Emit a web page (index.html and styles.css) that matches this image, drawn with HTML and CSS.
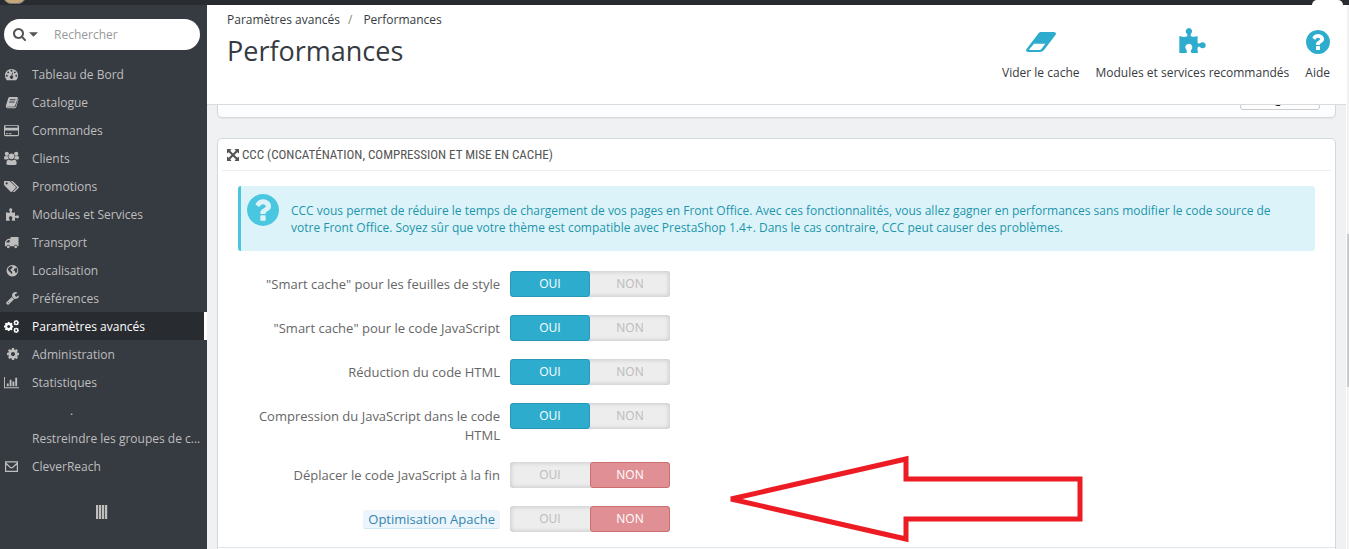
FILE: index.html
```html
<!DOCTYPE html>
<html lang="fr">
<head>
    <meta charset="utf-8"/>
    <title>Performances</title>
    <link rel="stylesheet" href="styles.css">
</head>
<body>
<svg class="sprite" aria-hidden="true">
    <symbol id="i-cog" viewBox="128 128 1536 1536"><path d="M1152 896q0-106-75-181t-181-75-181 75-75 181 75 181 181 75 181-75 75-181zm512-109v222q0 12-8 23t-20 13l-185 28q-19 54-39 91 35 50 107 138 10 12 10 25t-9 23q-27 37-99 108t-94 71q-12 0-26-9l-138-108q-44 23-91 38-16 136-29 186-7 28-36 28h-222q-14 0-24.5-8.5t-11.5-21.5l-28-184q-49-16-90-37l-141 107q-10 9-25 9-14 0-25-11-126-114-165-168-7-10-7-23 0-12 8-23 15-21 51-66.5t54-70.5q-27-50-41-99l-183-27q-13-2-21-12.5t-8-23.5v-222q0-12 8-23t19-13l186-28q14-46 39-92-40-57-107-138-10-12-10-24 0-10 9-23 26-36 98.5-107.5t94.5-71.5q13 0 26 10l138 107q44-23 91-38 16-136 29-186 7-28 36-28h222q14 0 24.5 8.5t11.5 21.5l28 184q49 16 90 37l142-107q9-9 24-9 13 0 25 10 129 119 165 170 7 8 7 22 0 12-8 23-15 21-51 66.5t-54 70.5q26 50 41 98l183 28q13 2 21 12.5t8 23.5z"/></symbol>
    <symbol id="i-help" viewBox="128 128 1536 1536"><path d="M1024 1376v-192q0-14-9-23t-23-9h-192q-14 0-23 9t-9 23v192q0 14 9 23t23 9h192q14 0 23-9t9-23zm256-672q0-88-55.5-163t-138.5-116-170-41q-243 0-371 213-15 24 8 42l132 100q7 6 19 6 16 0 25-12 53-68 86-92 34-24 86-24 48 0 85.5 26t37.5 59q0 38-20 61t-68 45q-63 28-115.5 86.5t-52.5 125.5v36q0 14 9 23t23 9h192q14 0 23-9t9-23q0-19 21.5-49.5t54.5-49.5q32-18 49-28.5t46-35 44.5-48 28-60.5 12.5-81zm384 192q0 209-103 385.5t-279.5 279.5-385.5 103-385.5-103-279.5-279.5-103-385.5 103-385.5 279.5-279.5 385.5-103 385.5 103 279.5 279.5 103 385.5z"/></symbol>
    <symbol id="i-puzzle" viewBox="0 0 78 74"><path d="M0 24Q12 28 22 25Q26 23 23 18Q18 14 19 8Q21 0 28 0Q36 0 38 8Q38 13 34 18Q32 24 36 25Q46 27 54 24V42Q55 48 61 45Q64 42 69 42Q78 43 78 51Q78 60 69 60Q64 60 61 56Q55 53 54 60Q53 68 56 73Q46 75 35 73Q32 70 36 64Q40 59 37 52Q33 46 28 47Q20 47 18 54Q17 60 21 65Q24 71 21 74H0Z"/></symbol>
</svg>
<div class="topbar">
    <span class="avatar"></span>
    <span class="tab"></span>
</div>
<div class="wrap">
    <nav class="sidebar">
        <form class="search">
            <button type="button" aria-label="Type de recherche">
                <svg width="13" height="13" viewBox="64 128 1664 1664"><path d="M1216 832q0-185-131.5-316.5t-316.5-131.5-316.5 131.5-131.5 316.5 131.5 316.5 316.5 131.5 316.5-131.5 131.5-316.5zm512 832q0 52-38 90t-90 38q-54 0-90-38l-343-342q-179 124-399 124-143 0-273.5-55.5t-225-150-150-225-55.5-273.5 55.5-273.5 150-225 225-150 273.5-55.5 273.5 55.5 225 150 150 225 55.5 273.5q0 220-124 399l343 343q37 37 37 90z"/></svg>
                <svg width="9" height="5" viewBox="0 0 8 4"><path d="M0 0h8L4 4z"/></svg>
            </button>
            <input type="text" placeholder="Rechercher" aria-label="Rechercher">
        </form>
        <ul class="menu">
            <li><a href="#"><svg viewBox="0 0 16 16"><path fill-rule="evenodd" d="M3 14Q1 12 1 9a7 7 0 0 1 14 0Q15 12 13 14ZM3 8.300a1 1 0 1 0 .1 2a1 1 0 1 0-.1-2ZM4.500 4.700a1 1 0 1 0 .1 2a1 1 0 1 0-.1-2ZM8 3a1 1 0 1 0 .1 2a1 1 0 1 0-.1-2ZM11.500 4.700a1 1 0 1 0 .1 2a1 1 0 1 0-.1-2ZM13 8.300a1 1 0 1 0 .1 2a1 1 0 1 0-.1-2ZM8.700 6L7.800 9.200a1.700 1.700 0 1 0 1 .2L9.600 6.200Z"/></svg>Tableau de Bord</a></li>
            <li><a href="#"><svg viewBox="0 0 16 16"><path fill-rule="evenodd" d="M6 2H14Q15.500 2.500 15 4L12.500 12Q12 13 11 13H4Q3 13 3.300 12.400H10.500Q11.500 12.400 12 11L14.500 4V3L15.500 4.500L13 13Q12.500 14 11.500 14H3.500Q1.500 13.500 2 11.500L4.500 3.500Q5 2 6 2ZM6.500 4.500L6.200 5.500H12L12.300 4.500ZM5.800 7L5.500 8H11.200L11.500 7Z"/></svg>Catalogue</a></li>
            <li><a href="#"><svg viewBox="0 0 16 16"><path fill-rule="evenodd" d="M1.500 2H14.500Q16 2 16 3.500V12.500Q16 14 14.500 14H1.500Q0 14 0 12.500V3.500Q0 2 1.500 2ZM1.500 3V5H14.500V3ZM1 8V12.700H15V8ZM2 11H4V12H2ZM5 11H8V12H5Z"/></svg>Commandes</a></li>
            <li><a href="#"><svg viewBox="0 0 16 16"><circle cx="3" cy="3" r="2.200"/><circle cx="13" cy="3" r="2.200"/><path d="M0 8Q0 5 1.300 5Q3 6.200 4.500 5.300Q4.300 7 5.200 8.200Q4 8.300 3.200 9H1.500Q0 9 0 8ZM16 8Q16 5 14.700 5Q13 6.200 11.500 5.300Q11.700 7 10.800 8.200Q12 8.300 12.800 9H14.500Q16 9 16 8Z"/><circle cx="8" cy="5.700" r="3"/><path d="M5 9Q8 11 11 9Q13.500 9.500 13.500 13Q13.500 15 11.500 15H4.500Q2.500 15 2.500 13Q2.500 9.500 5 9Z"/></svg>Clients</a></li>
            <li><a href="#"><svg viewBox="0 0 16 16"><path fill-rule="evenodd" d="M0 2.500Q0 2 .5 2H5Q6 2 7 3L12.400 8.300Q13 9 12.400 9.700L8.500 13.600Q7.800 14.200 7.100 13.600L1 7.500Q0 6.500 0 5.500ZM2.800 3.500a1.200 1.200 0 1 0 .1 2.400a1.200 1.200 0 1 0-.1-2.400Z"/><path d="M7 2H8.300Q9 2 10 3L15.500 8.300Q16.200 9 15.500 9.700L11.500 13.700Q10.500 14.500 9.500 13.700L14 9L7.500 2.500Z"/></svg>Promotions</a></li>
            <li><a href="#"><svg class="s13"><use href="#i-puzzle"/></svg>Modules et Services</a></li>
            <li><a href="#"><svg viewBox="0 0 16 16"><path fill-rule="evenodd" d="M7 2H15.500V12H14.500A2 2 0 0 0 10.600 12H6.500A2 2 0 0 0 2.600 12H1V8Q1 7 1.700 6.300L3.500 4.500Q4 4 5 4H7ZM2.500 8H6V5.300H4.500L2.500 7.300Z"/><circle cx="4.500" cy="12.600" r="1.500"/><circle cx="12.500" cy="12.600" r="1.500"/></svg>Transport</a></li>
            <li><a href="#"><svg viewBox="0 0 16 16"><path fill-rule="evenodd" d="M9 2a6.200 6.200 0 1 1-.1 0ZM7 3.500Q4.500 4.500 4 7L5.500 9L7 10L8 12L9 10L8 8.500L6.500 7.500L8 6L9.500 4.500L8.500 3.500ZM11 6L13.500 5Q14.500 7 14 9.500L12.500 11L11.500 8.500L10 8Z"/></svg>Localisation</a></li>
            <li><a href="#"><svg class="s13" viewBox="64 128 1664 1664"><path d="M448 1472q0-26-19-45t-45-19-45 19-19 45 19 45 45 19 45-19 19-45zm644-420l-682 682q-37 37-90 37-52 0-91-37l-106-108q-38-36-38-90 0-53 38-91l681-681q39 98 114.500 173.500t173.500 114.500zm634-435q0 39-23 106-47 134-164.500 217.500t-258.500 83.500q-185 0-316.500-131.500t-131.500-316.500 131.500-316.500 316.500-131.500q58 0 121.500 16.500t107.500 46.500q16 11 16 28t-16 28l-293 169v224l193 107q5-3 79-48.500t135.500-81 70.500-35.500q15 0 23.500 10t8.500 25z"/></svg>Préférences</a></li>
            <li class="active"><a href="#"><svg viewBox="0 0 16 16"><use href="#i-cog" x="0" y="3" width="10" height="10"/><use href="#i-cog" x="10" y="1" width="6" height="6"/><use href="#i-cog" x="10" y="9" width="6" height="6"/></svg>Paramètres avancés</a></li>
            <li><a href="#"><svg class="s12"><use href="#i-cog"/></svg>Administration</a></li>
            <li><a href="#"><svg viewBox="0 0 16 16"><path d="M0 2H1V13H16V14H0ZM3 9H5V12H3ZM6 5H8V12H6ZM9 7H11V12H9ZM12 3H14V12H12Z"/></svg>Statistiques</a></li>
            <li><a href="#" class="dot">.</a></li>
            <li><a href="#" class="noicon">Restreindre les groupes de c...</a></li>
            <li><a href="#"><svg viewBox="0 0 16 16"><path fill="none" stroke="currentColor" stroke-width="1.300" d="M1.700 3H14.300V13.300H1.700ZM2 4.500L6.500 8.800Q8 10 9.500 8.800L14 4.500"/></svg>CleverReach</a></li>
        </ul>
        <button type="button" class="collapse" aria-label="Réduire le menu"></button>
    </nav>
    <div class="main">
        <header class="page-head">
            <div>
                <div class="breadcrumb"><a href="#">Paramètres avancés</a><span>/</span><a href="#">Performances</a></div>
                <h1>Performances</h1>
            </div>
            <div class="toolbar">
                <a href="#"><svg width="30" height="30" viewBox="0 0 90 90"><path fill-rule="evenodd" d="M44 18H84Q92 19 89 26L54 72Q49 78 42 78H6Q-2 77 1 70L36 24Q40 18 44 18ZM24 53L10 70Q9 72 12 72H40Q44 72 46 69L58 53Z"/></svg>Vider le cache</a>
                <a href="#"><svg width="27" height="30"><use href="#i-puzzle" width="27" height="25" y="2"/></svg>Modules et services recommandés</a>
                <a href="#"><svg width="24" height="30"><use href="#i-help" width="24" height="24" y="4"/></svg>Aide</a>
            </div>
        </header>
        <div class="content">
            <div class="panel panel-prev">
                <button type="button">Enregistrer</button>
            </div>
            <div class="panel">
                <h3><svg width="12" height="12" viewBox="0 0 12 12"><path d="M0 0H4.500L3.200 1.700L6 4.500L8.800 1.700L7.500 0H12V4.500L10.300 3.200L7.500 6L10.300 8.800L12 7.500V12H7.500L8.800 10.300L6 7.500L3.200 10.300L4.500 12H0V7.500L1.700 8.800L4.500 6L1.700 3.200L0 4.500Z"/></svg>CCC (CONCATÉNATION, COMPRESSION ET MISE EN CACHE)</h3>
                <div class="alert">
                    <svg width="32" height="32"><use href="#i-help"/></svg>
                    <p>CCC vous permet de réduire le temps de chargement de vos pages en Front Office. Avec ces fonctionnalités, vous allez gagner en performances sans modifier le code source de votre Front Office. Soyez sûr que votre thème est compatible avec PrestaShop 1.4+. Dans le cas contraire, CCC peut causer des problèmes.</p>
                </div>
                <div class="row" role="radiogroup" aria-labelledby="l1">
                    <div class="name" id="l1">"Smart cache" pour les feuilles de style</div>
                    <div class="switch">
                        <input type="radio" name="css" id="css_on" checked><label for="css_on">OUI</label>
                        <input type="radio" name="css" id="css_off" class="off"><label for="css_off">NON</label>
                    </div>
                </div>
                <div class="row" role="radiogroup" aria-labelledby="l2">
                    <div class="name" id="l2">"Smart cache" pour le code JavaScript</div>
                    <div class="switch">
                        <input type="radio" name="js" id="js_on" checked><label for="js_on">OUI</label>
                        <input type="radio" name="js" id="js_off" class="off"><label for="js_off">NON</label>
                    </div>
                </div>
                <div class="row" role="radiogroup" aria-labelledby="l3">
                    <div class="name" id="l3">Réduction du code HTML</div>
                    <div class="switch">
                        <input type="radio" name="html" id="html_on" checked><label for="html_on">OUI</label>
                        <input type="radio" name="html" id="html_off" class="off"><label for="html_off">NON</label>
                    </div>
                </div>
                <div class="row" role="radiogroup" aria-labelledby="l4">
                    <div class="name" id="l4">Compression du JavaScript dans le code HTML</div>
                    <div class="switch">
                        <input type="radio" name="inline" id="inline_on" checked><label for="inline_on">OUI</label>
                        <input type="radio" name="inline" id="inline_off" class="off"><label for="inline_off">NON</label>
                    </div>
                </div>
                <div class="row" role="radiogroup" aria-labelledby="l5">
                    <div class="name" id="l5">Déplacer le code JavaScript à la fin</div>
                    <div class="switch">
                        <input type="radio" name="defer" id="defer_on"><label for="defer_on">OUI</label>
                        <input type="radio" name="defer" id="defer_off" class="off" checked><label for="defer_off">NON</label>
                    </div>
                </div>
                <div class="row" role="radiogroup" aria-labelledby="l6">
                    <div class="name" id="l6"><span class="tip">Optimisation Apache</span></div>
                    <div class="switch">
                        <input type="radio" name="apache" id="apache_on"><label for="apache_on">OUI</label>
                        <input type="radio" name="apache" id="apache_off" class="off" checked><label for="apache_off">NON</label>
                    </div>
                </div>
                <div class="panel-foot"></div>
            </div>
        </div>
    </div>
    <div class="scroll"><div class="thumb"></div></div>
</div>
<svg class="arrow" width="356" height="88" viewBox="0 0 356 88"><path d="M4 44L179 4V24H353V64H179V84Z"/></svg>
</body>
</html>
```
FILE: styles.css
```css
* {
    box-sizing: border-box;
    margin: 0;
    padding: 0;
}

body {
    display: flex;
    flex-direction: column;
    height: 100vh;
    overflow: hidden;
    font: 12px/17px "Open Sans", sans-serif;
    color: #363a41;
    background: #eff1f2;
}

a {
    text-decoration: none;
    color: inherit;
}
li {
    list-style: none;
}
button, input {
    font: inherit;
    border: 0;
    background: none;
}
svg {
    fill: currentColor;
}
.sprite {
    position: absolute;
    width: 0;
    height: 0;
}

/* top bar */
.topbar {
    display: flex;
    justify-content: space-between;
    align-items: flex-end;
    height: 5px;
    padding: 0 6px 0 3px;
    background: #282b30;
    overflow: hidden;
}
.avatar {
    width: 23px;
    height: 16px;
    border: 1px solid #777;
    border-radius: 8px;
    background: #c5a878;
    margin-bottom: 1px;
    flex: none;
}
.tab {
    width: 31px;
    height: 5px;
    border-radius: 10px 10px 0 0;
    background: #fff;
}
.wrap {
    display: flex;
    flex: 1;
    min-height: 0;
}

/* sidebar */
.sidebar {
    flex: none;
    width: 207px;
    padding-top: 14px;
    color: #bebebe;
    background: #363a41;
}
.search {
    display: flex;
    align-items: center;
    height: 31px;
    margin: 0 7px 10px 4px;
    padding-left: 9px;
    border-radius: 16px;
    background: #fff;
}
.search button {
    display: flex;
    align-items: center;
    gap: 3px;
    color: #555;
}
.search input {
    flex: 1;
    min-width: 0;
    padding: 0 16px;
    color: #555;
}
.search input::placeholder {
    color: #999;
}
.menu a {
    display: flex;
    align-items: center;
    gap: 13px;
    height: 28px;
    padding-left: 4px;
    white-space: nowrap;
}
.menu svg {
    width: 15px;
    height: 15px;
}
.menu .s13 {
    width: 13px;
    height: 13px;
    margin-left: 2px;
}
.menu .s12 {
    width: 12px;
    height: 12px;
    margin-left: 3px;
}
.menu .noicon {
    padding-left: 32px;
}
.menu .dot {
    padding-left: 70px;
}
.menu .active a {
    color: #fff;
    background: #282b30;
    border-right: 3px solid #fff;
}
.collapse {
    display: block;
    width: 12px;
    height: 14px;
    margin: 25px auto 0 96px;
    background: repeating-linear-gradient(90deg, #bebebe 0, #bebebe 2px, #555 2px, #555 3px);
}

/* header */
.main {
    display: flex;
    flex-direction: column;
    flex: 1;
    min-width: 0;
}
.page-head {
    display: flex;
    justify-content: space-between;
    flex: none;
    height: 100px;
    padding: 6px 16px 0 20px;
    border-bottom: 1px solid #d9dbdd;
    background: #fff;
    z-index: 1;
}
.breadcrumb span {
    margin: 0 11px 0 8px;
    color: #7a8a6a;
}
.page-head h1 {
    margin-top: 4px;
    font-size: 27px;
    line-height: 37px;
    font-weight: normal;
}
.toolbar {
    display: flex;
    gap: 16px;
    padding-top: 15px;
}
.toolbar a {
    display: flex;
    flex-direction: column;
    align-items: center;
    gap: 8px;
}
.toolbar svg {
    color: #2eacce;
}

/* panels */
.content {
    flex: 1;
    min-height: 0;
    padding: 0 10px;
    overflow: hidden;
}
.panel {
    margin-bottom: 20px;
    padding: 0 4px 20px;
    border: 1px solid #d3d8db;
    border-radius: 5px;
    background: #fff;
    box-shadow: 0 1px 1px #e4e6e8;
}
.panel-prev {
    display: flex;
    justify-content: flex-end;
    margin-top: -62px;
    padding: 7px 15px 7px;
    background: #fcfdfe;
}
.panel-prev button {
    width: 80px;
    height: 59px;
    padding-top: 36px;
    border: 1px solid #ccc;
    border-radius: 3px;
    background: #fff;
}
.panel h3 {
    display: flex;
    align-items: center;
    gap: 3px;
    height: 32px;
    padding-left: 5px;
    border-bottom: 1px solid #eee;
    font: 13px/20px "Roboto Condensed", sans-serif;
    color: #555;
}
.alert {
    display: flex;
    gap: 12px;
    min-height: 65px;
    margin: 15px 16px 20px;
    padding: 8px 30px 14px 6px;
    border-left: 3px solid #4ac7e0;
    border-radius: 3px;
    color: #1e94ab;
    background: #dcf4f9;
}
.alert svg {
    flex: none;
    color: #4ac7e0;
}
.alert p {
    padding-top: 8px;
}
.row {
    display: flex;
    align-items: flex-start;
    gap: 10px;
    min-height: 27px;
    margin: 0 16px 17px;
    font-size: 13px;
    line-height: 19px;
    color: #666;
}
.name {
    width: 262px;
    padding-top: 4px;
    text-align: right;
}
.tip {
    padding: 0 5px;
    border-bottom: 1px solid #cfe8f5;
    border-radius: 3px;
    color: #3586ae;
    background: #ebf5fb;
}
.switch {
    display: flex;
    width: 160px;
    height: 26px;
    border-radius: 3px;
    background: #ededed;
    box-shadow: inset 0 0 4px 1px rgba(0,0,0,.15);
}
.switch input {
    position: absolute;
    opacity: 0;
}
.switch label {
    flex: 1;
    border: 1px solid transparent;
    border-radius: 3px;
    font-size: 12px;
    line-height: 24px;
    text-align: center;
    color: #bbb;
    cursor: pointer;
}
.switch input:checked + label {
    color: #fff;
    background: #2eacce;
    border-color: #2899b8;
}
.switch input.off:checked + label {
    background: #e08f95;
    border-color: #ca6f6f;
}
.panel-foot {
    height: 60px;
    margin: -3px -4px 0;
    border-top: 1px solid #e6e6e6;
    background: #fcfdfe;
}

/* scrollbar */
.scroll {
    flex: none;
    width: 3px;
    padding-top: 229px;
    border-left: 1px solid #fff;
    background: #f1f1f1;
}
.thumb {
    height: 153px;
    background: #c9cacb;
}

/* arrow drawn over the form */
.arrow {
    position: absolute;
    left: 727px;
    top: 455px;
    fill: none;
    stroke: #ed1c24;
    stroke-width: 5;
}
```
